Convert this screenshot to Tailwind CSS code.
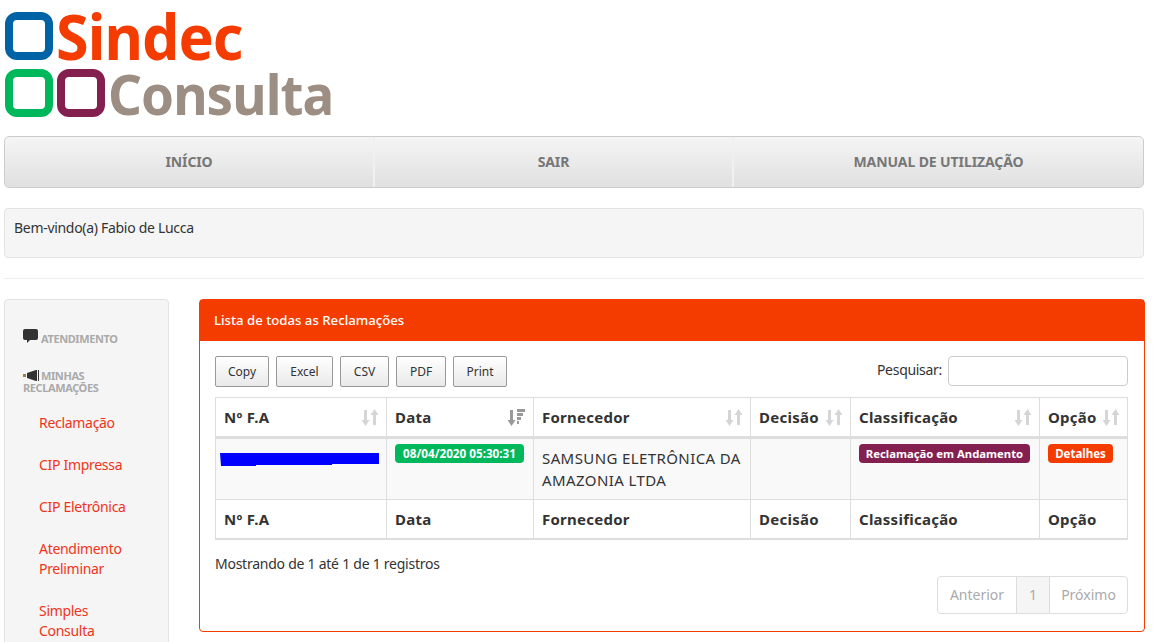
<!DOCTYPE html>
<html lang="pt-BR">
    <head>
        <meta charset="UTF-8" />
        <title>Sindec Consulta</title>
        <script src="https://cdn.jsdelivr.net/npm/@tailwindcss/browser@4"></script>
    </head>
    <body class="h-[642px] overflow-hidden bg-white font-['Noto_Sans',sans-serif] text-[14px] leading-5 tracking-[-0.3px] text-[#333]">
        <div class="w-[1140px] ml-1">
            <!-- logo -->
            <div class="pt-3 pl-px h-[136px] tracking-normal">
                <div class="flex gap-1 h-12 mb-[9px]">
                    <div class="w-12 h-12 border-[8px] border-[#0063a5] rounded-xl"></div>
                    <span class="block -ml-px text-[62px] leading-12 font-bold text-[#f53c00] origin-left scale-x-[0.955] tracking-[-1px]">Sindec</span>
                </div>
                <div class="flex gap-1 h-12">
                    <div class="w-12 h-12 border-[8px] border-[#00b85c] rounded-xl"></div>
                    <div class="w-12 h-12 border-[8px] border-[#84204f] rounded-xl"></div>
                    <span class="block -ml-px text-[56px] leading-12 font-bold text-[#9c8e82] origin-left scale-x-[0.945] tracking-[-1px]">Consulta</span>
                </div>
            </div>

            <!-- nav -->
            <div class="flex h-[52px] border border-[#ccc] rounded-[5px] bg-linear-to-b from-[#f5f5f5] to-[#e0e0e0] font-bold text-[#777] tracking-[-0.1px]">
                <div class="w-[370px] flex items-center justify-center border-r-2 border-[#f0f0f0]">INÍCIO</div>
                <div class="w-[359px] flex items-center justify-center border-r-2 border-[#f0f0f0]">SAIR</div>
                <div class="flex-1 flex items-center justify-center">MANUAL DE UTILIZAÇÃO</div>
            </div>

            <!-- welcome -->
            <div class="mt-5 h-[50px] px-[9px] py-[9px] bg-[#f5f5f5] border border-[#e3e3e3] rounded-[4px]">Bem-vindo(a) Fabio de Lucca</div>
            <div class="mt-5 border-t border-[#eee]"></div>

            <div class="mt-5 flex gap-[30px] items-start">
                <!-- sidebar -->
                <div class="w-[165px] h-[400px] shrink-0 bg-[#f5f5f5] border border-[#e3e3e3] rounded-[4px] pt-[29px] pl-[18px]">
                    <div class="flex items-start text-[11px] leading-3 font-bold text-[#aaa] tracking-[-0.4px]">
                        <svg class="w-[15px] h-[14px] mr-[3px] shrink-0" viewBox="0 0 15 14"><path fill="#333" d="M2 0h11a2 2 0 0 1 2 2v7a2 2 0 0 1-2 2H7l-3 3v-3H2a2 2 0 0 1-2-2V2a2 2 0 0 1 2-2z"/></svg>
                        <span class="pt-1">ATENDIMENTO</span>
                    </div>
                    <div class="mt-[25px] text-[11px] leading-3 font-bold text-[#aaa] tracking-[-0.4px]">
                        <svg class="inline-block align-top w-[16px] h-[12px] mr-[2px]" viewBox="0 0 16 12"><path fill="#333" d="M4 3l9-3h1v11h-1L4 8z"/><rect x="15" width="1" height="11" fill="#333"/><path fill="#a67c3c" d="M0 4h3v3H0z"/></svg>MINHAS<br />RECLAMAÇÕES
                    </div>
                    <div class="mt-[8px] pl-[16px] text-[#f0341a]">
                        <div class="py-[11px]">Reclamação</div>
                        <div class="py-[11px]">CIP Impressa</div>
                        <div class="py-[11px]">CIP Eletrônica</div>
                        <div class="py-[11px]">Atendimento<br />Preliminar</div>
                        <div class="py-[11px]">Simples<br />Consulta</div>
                    </div>
                </div>

                <!-- panel -->
                <div class="flex-1 h-[333px] border border-[#f53c00] rounded-[4px]">
                    <div class="h-[41px] bg-[#f53c00] px-[14px] pb-[2px] flex items-center text-[13.2px] font-medium tracking-normal text-white">Lista de todas as Reclamações</div>
                    <div class="pl-[15px] pr-[16px] pt-[15px]">
                        <div class="flex justify-between h-[31px]">
                            <div class="flex gap-[7px] text-[12px] tracking-normal text-[#333]">
                                <button class="w-[54px] h-[31px] border border-[#999] rounded-[2px] bg-linear-to-b from-white to-[#e9e9e9]">Copy</button>
                                <button class="w-[57px] h-[31px] border border-[#999] rounded-[2px] bg-linear-to-b from-white to-[#e9e9e9]">Excel</button>
                                <button class="w-[49px] h-[31px] border border-[#999] rounded-[2px] bg-linear-to-b from-white to-[#e9e9e9]">CSV</button>
                                <button class="w-[50px] h-[31px] border border-[#999] rounded-[2px] bg-linear-to-b from-white to-[#e9e9e9]">PDF</button>
                                <button class="w-[54px] h-[31px] border border-[#999] rounded-[2px] bg-linear-to-b from-white to-[#e9e9e9]">Print</button>
                            </div>
                            <div class="flex items-start gap-[6px]">
                                <span class="leading-[28px]">Pesquisar:</span>
                                <input class="w-[180px] h-[30px] border border-[#ccc] rounded-[4px]" type="search" />
                            </div>
                        </div>
                        <table class="mt-[10px] w-[912px] table-fixed border-collapse text-[15px] tracking-[0.25px]">
                            <colgroup>
                                <col class="w-[171px]" />
                                <col class="w-[147px]" />
                                <col class="w-[217px]" />
                                <col class="w-[100px]" />
                                <col class="w-[189px]" />
                                <col class="w-[88px]" />
                            </colgroup>
                            <thead>
                                <tr class="h-[40px] font-bold text-left">
                                    <th class="border border-[#ddd] border-b-[3px] px-[8px]"><div class="flex justify-between items-center">Nº F.A<svg class="w-[16px] h-[17px] shrink-0" viewBox="0 0 16 17"><path fill="#d5d5d5" d="M2 1h3v10h2.500L3.500 17-.5 11H2zM11 16V6H8.500l4-6 4 6H14v10z"/></svg></div></th>
                                    <th class="border border-[#ddd] border-b-[3px] px-[8px]"><div class="flex justify-between items-center">Data<svg class="w-[17px] h-[17px] shrink-0" viewBox="0 0 17 17"><path fill="#999" d="M2 1h3v10h2.500L3.500 17-.5 11H2zM9 0h8v3H9zM9 4h6v3H9zM9 8h4v3H9zM9 12h2v3H9z"/></svg></div></th>
                                    <th class="border border-[#ddd] border-b-[3px] px-[8px]"><div class="flex justify-between items-center">Fornecedor<svg class="w-[16px] h-[17px] shrink-0" viewBox="0 0 16 17"><path fill="#d5d5d5" d="M2 1h3v10h2.500L3.500 17-.5 11H2zM11 16V6H8.500l4-6 4 6H14v10z"/></svg></div></th>
                                    <th class="border border-[#ddd] border-b-[3px] px-[8px]"><div class="flex justify-between items-center">Decisão<svg class="w-[16px] h-[17px] shrink-0" viewBox="0 0 16 17"><path fill="#d5d5d5" d="M2 1h3v10h2.500L3.500 17-.5 11H2zM11 16V6H8.500l4-6 4 6H14v10z"/></svg></div></th>
                                    <th class="border border-[#ddd] border-b-[3px] px-[8px]"><div class="flex justify-between items-center">Classificação<svg class="w-[16px] h-[17px] shrink-0" viewBox="0 0 16 17"><path fill="#d5d5d5" d="M2 1h3v10h2.500L3.500 17-.5 11H2zM11 16V6H8.500l4-6 4 6H14v10z"/></svg></div></th>
                                    <th class="border border-[#ddd] border-b-[3px] px-[8px]"><div class="flex justify-between items-center">Opção<svg class="w-[16px] h-[17px] shrink-0" viewBox="0 0 16 17"><path fill="#d5d5d5" d="M2 1h3v10h2.500L3.500 17-.5 11H2zM11 16V6H8.500l4-6 4 6H14v10z"/></svg></div></th>
                                </tr>
                            </thead>
                            <tbody>
                                <tr class="h-[62px] bg-[#f9f9f9] align-top">
                                    <td class="border border-[#ddd] px-[4px] pt-[14px]"><svg class="w-[160px] h-[14px] block" viewBox="0 0 160 14"><path fill="#00f" d="M0 0h159v11H112v1H36v1H1z"/></svg></td>
                                    <td class="border border-[#ddd] px-[8px] pt-[5px]"><span class="block w-[129px] h-[19px] rounded-[4px] bg-[#00b85c] text-white text-[11.7px] tracking-normal leading-[19px] font-bold text-center">08/04/2020 05:30:31</span></td>
                                    <td class="border border-[#ddd] px-[8px] pt-[8px] leading-[22px] tracking-[0.4px]">SAMSUNG ELETRÔNICA DA AMAZONIA LTDA</td>
                                    <td class="border border-[#ddd]"></td>
                                    <td class="border border-[#ddd] px-[8px] pt-[5px]"><span class="block w-[171px] h-[19px] rounded-[4px] bg-[#84204f] text-white text-[11.3px] tracking-normal leading-[19px] font-bold text-center">Reclamação em Andamento</span></td>
                                    <td class="border border-[#ddd] px-[8px] pt-[5px]"><span class="block w-[65px] h-[19px] rounded-[4px] bg-[#f53c00] text-white text-[11.5px] tracking-normal leading-[19px] font-bold text-center">Detalhes</span></td>
                                </tr>
                            </tbody>
                            <tfoot>
                                <tr class="h-[39px] font-bold text-left">
                                    <th class="border border-[#ddd] border-b-2 px-[8px]">Nº F.A</th>
                                    <th class="border border-[#ddd] border-b-2 px-[8px]">Data</th>
                                    <th class="border border-[#ddd] border-b-2 px-[8px]">Fornecedor</th>
                                    <th class="border border-[#ddd] border-b-2 px-[8px]">Decisão</th>
                                    <th class="border border-[#ddd] border-b-2 px-[8px]">Classificação</th>
                                    <th class="border border-[#ddd] border-b-2 px-[8px]">Opção</th>
                                </tr>
                            </tfoot>
                        </table>
                        <div class="mt-[14px] tracking-[-0.25px]">Mostrando de 1 até 1 de 1 registros</div>
                        <div class="mt-[2px] flex justify-end">
                            <div class="flex h-[38px] border border-[#ddd] rounded-[4px] text-[#aaa] tracking-normal">
                                <div class="w-[79px] flex items-center justify-center border-r border-[#ddd]">Anterior</div>
                                <div class="w-[33px] flex items-center justify-center border-r border-[#ddd] bg-[#f5f5f5]">1</div>
                                <div class="w-[77px] flex items-center justify-center">Próximo</div>
                            </div>
                        </div>
                    </div>
                </div>
            </div>
        </div>
    </body>
</html>
